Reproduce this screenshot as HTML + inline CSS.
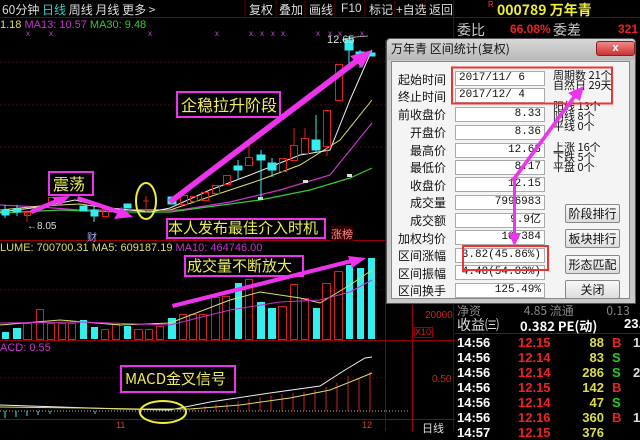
<!DOCTYPE html>
<html><head><meta charset="utf-8"><style>
*{margin:0;padding:0;box-sizing:border-box}
body{width:640px;height:431px;background:#000;overflow:hidden;position:relative;font-family:"Liberation Sans","Noto Sans CJK SC",sans-serif;color:#ddd}
.a{position:absolute;white-space:nowrap}
.cj{font-family:"Noto Sans CJK SC","WenQuanYi Zen Hei",sans-serif}
.lbl{position:absolute;right:0;width:60px;text-align:right;font-size:12px;color:#111}
.inp{position:absolute;left:455px;width:90px;height:15px;background:#fff;border:1px solid #aaa;font-size:11px;color:#111;text-align:right;padding-right:3px;line-height:13px;font-family:"Liberation Mono","Noto Sans CJK SC",monospace}
.btn{position:absolute;left:565px;width:55px;height:19px;background:linear-gradient(#f8f8f8,#ddd);border:1px solid #888;border-radius:2px;font-size:12px;color:#111;text-align:center;line-height:17px}
.tr{position:absolute;left:457px;font-size:13px;font-weight:bold;height:15px;line-height:15px}
.tb{position:absolute;top:1px;font-size:12px;color:#ddd}
</style></head><body>
<svg class="a" style="left:0;top:0" width="640" height="431">
<line x1="0" y1="17.5" x2="640" y2="17.5" stroke="#700" />
<g stroke="#600"><line x1="245" y1="0" x2="245" y2="17"/><line x1="276" y1="0" x2="276" y2="17"/><line x1="305" y1="0" x2="305" y2="17"/><line x1="335" y1="0" x2="335" y2="17"/><line x1="365" y1="0" x2="365" y2="17"/><line x1="395" y1="0" x2="395" y2="17"/><line x1="425" y1="0" x2="425" y2="17"/><line x1="453.5" y1="0" x2="453.5" y2="431"/></g>
<g stroke="#500" stroke-dasharray="2,2"><line x1="0" y1="62" x2="385" y2="62"/><line x1="0" y1="105" x2="385" y2="105"/><line x1="0" y1="147" x2="385" y2="147"/><line x1="0" y1="290" x2="385" y2="290"/><line x1="0" y1="378" x2="385" y2="378"/></g>
<line x1="0" y1="240.5" x2="385" y2="240.5" stroke="#900"/>
<line x1="0" y1="340.5" x2="455" y2="340.5" stroke="#900"/>
<line x1="0" y1="419.5" x2="455" y2="419.5" stroke="#900"/>
<line x1="385.5" y1="40" x2="385.5" y2="431" stroke="#700"/>
<line x1="412.5" y1="305" x2="412.5" y2="431" stroke="#900"/>
<line x1="455" y1="333.5" x2="640" y2="333.5" stroke="#900"/>
<line x1="386" y1="411" x2="410" y2="411" stroke="#aaa" stroke-dasharray="1,2"/>
<rect x="414.5" y="327.5" width="18" height="10" fill="none" stroke="#900"/>
<g fill="#c4c" font-size="8"><text x="26" y="36">x</text><text x="49" y="36">x</text><text x="148" y="36">x</text><text x="215" y="36">x</text><text x="249" y="36">x</text><text x="260" y="36">x</text><text x="271" y="36">x</text><text x="281" y="36">x</text><text x="316" y="36">x</text><text x="328" y="36">x</text><text x="338" y="36">x</text><text x="360" y="36">x</text></g>
<polyline fill="none" stroke="#c3c" stroke-width="1.2" points="0,205 40,207 80,210 120,210 180,210 230,202 280,190 330,175 372,123"/>
<polyline fill="none" stroke="#3c3" stroke-width="1.2" points="0,213 60,210 120,212 170,212 260,200 310,190 350,178 372,168"/>
<polyline fill="none" stroke="#dd6" stroke-width="1" points="0,210 40,206 80,204 120,210 170,210 260,180 300,165 340,140 372,100"/>
<polyline fill="none" stroke="#eee" stroke-width="1" points="0,212 40,207 75,200 110,208 150,212 170,208 210,190 250,175 300,155 330,150 350,100 372,50"/>
<g fill="#ddd"><rect x="258" y="197" width="5" height="3"/><rect x="303" y="180" width="5" height="3"/><rect x="347" y="174" width="5" height="3"/></g>
<g stroke="#3ee" fill="#3ee"><line x1="5" y1="205" x2="5" y2="218"/><rect x="2" y="210" width="7" height="5"/><line x1="17" y1="205" x2="17" y2="216"/><rect x="13" y="209" width="8" height="3"/><rect x="80" y="206" width="7" height="5"/><line x1="94" y1="205" x2="94" y2="222"/><rect x="91" y="210" width="7" height="6"/><rect x="124" y="204" width="7" height="4"/><rect x="168" y="197" width="8" height="7"/><line x1="238" y1="160" x2="238" y2="180"/><rect x="234" y="166" width="8" height="4"/><line x1="261" y1="150" x2="261" y2="200"/><rect x="257" y="155" width="8" height="5"/><line x1="272" y1="158" x2="272" y2="177"/><rect x="268" y="163" width="8" height="7"/><line x1="316" y1="115" x2="316" y2="152"/><rect x="312" y="140" width="8" height="10"/><line x1="349" y1="36" x2="349" y2="64"/><rect x="345" y="40" width="8" height="10"/><line x1="360" y1="50" x2="360" y2="68"/><rect x="356" y="52" width="8" height="4"/><rect x="367" y="53" width="8" height="3"/></g>
<g stroke="#d22" fill="none"><line x1="27" y1="210" x2="27" y2="222"/><rect x="24.5" y="212.5" width="6" height="3"/><rect x="48.5" y="197.5" width="6" height="5"/><rect x="102.5" y="208.5" width="6" height="8"/><line x1="146" y1="196" x2="146" y2="212"/><line x1="143" y1="201" x2="149" y2="201"/><rect x="180.5" y="195.5" width="7" height="9"/><rect x="190.5" y="196.5" width="7" height="5"/><rect x="201.5" y="192.5" width="7" height="8"/><rect x="212.5" y="185.5" width="7" height="8"/><rect x="223.5" y="175.5" width="7" height="9"/><line x1="249" y1="145" x2="249" y2="157"/><rect x="245.5" y="157.5" width="7" height="8"/><rect x="279.5" y="158.5" width="7" height="13"/><line x1="294" y1="128" x2="294" y2="145"/><rect x="290.5" y="145.5" width="7" height="15"/><line x1="305" y1="128" x2="305" y2="138"/><rect x="301.5" y="138.5" width="7" height="15"/><line x1="327" y1="146" x2="327" y2="156"/><rect x="323.5" y="110.5" width="7" height="36"/><rect x="335.5" y="64.5" width="7" height="36"/></g>
<polyline points="342,40 355,37 368,36" fill="none" stroke="#ccc" stroke-width="0.8"/>
<g fill="#3ee"><rect x="2" y="332" width="7" height="7"/><rect x="13" y="328" width="8" height="11"/><rect x="80" y="320" width="7" height="19"/><rect x="91" y="327" width="7" height="12"/><rect x="124" y="326" width="7" height="13"/><rect x="168" y="318" width="8" height="21"/><rect x="235" y="283" width="7" height="56"/><rect x="257" y="302" width="8" height="37"/><rect x="268" y="308" width="8" height="31"/><rect x="313" y="308" width="7" height="31"/><rect x="346" y="265" width="7" height="74"/><rect x="357" y="268" width="7" height="71"/><rect x="368" y="258" width="7" height="81"/></g>
<g fill="none" stroke="#c22"><rect x="23.5" y="323.5" width="8" height="16"/><rect x="36.5" y="309.5" width="7" height="30"/><rect x="47.5" y="323.5" width="7" height="16"/><rect x="58.5" y="323.5" width="7" height="16"/><rect x="68.5" y="323.5" width="7" height="16"/><rect x="101.5" y="329.5" width="7" height="10"/><rect x="112.5" y="324.5" width="7" height="15"/><rect x="134.5" y="329.5" width="8" height="10"/><rect x="145.5" y="329.5" width="7" height="10"/><rect x="156.5" y="326.5" width="7" height="13"/><rect x="179.5" y="314.5" width="7" height="25"/><rect x="189.5" y="314.5" width="7" height="25"/><rect x="199.5" y="314.5" width="7" height="25"/><rect x="211.5" y="297.5" width="8" height="42"/><rect x="222.5" y="296.5" width="7" height="43"/><rect x="245.5" y="279.5" width="7" height="60"/><rect x="278.5" y="306.5" width="8" height="33"/><rect x="290.5" y="284.5" width="7" height="55"/><rect x="301.5" y="298.5" width="7" height="41"/><rect x="322.5" y="283.5" width="8" height="56"/><rect x="334.5" y="271.5" width="8" height="68"/></g>
<polyline fill="none" stroke="#dd6" points="0,325 60,320 120,325 170,323 230,300 260,292 300,298 320,303 350,285 372,270"/>
<polyline fill="none" stroke="#c3c" points="0,323 80,322 170,325 230,310 280,302 320,300 350,292 372,280"/>
<line x1="0" y1="411" x2="385" y2="411" stroke="#bbb" stroke-dasharray="1,2"/>
<g stroke="#3ee"><line x1="5" y1="411" x2="5" y2="418"/><line x1="16" y1="411" x2="16" y2="417"/><line x1="27" y1="411" x2="27" y2="416"/><line x1="38" y1="411" x2="38" y2="415"/><line x1="50" y1="411" x2="50" y2="414"/><line x1="95" y1="411" x2="95" y2="414"/></g>
<g stroke="#c22"><line x1="194" y1="411" x2="194" y2="408"/><line x1="205" y1="411" x2="205" y2="406"/><line x1="216" y1="411" x2="216" y2="404"/><line x1="227" y1="411" x2="227" y2="403"/><line x1="238" y1="411" x2="238" y2="401"/><line x1="249" y1="411" x2="249" y2="399"/><line x1="260" y1="411" x2="260" y2="397"/><line x1="271" y1="411" x2="271" y2="396"/><line x1="282" y1="411" x2="282" y2="394"/><line x1="293" y1="411" x2="293" y2="393"/><line x1="304" y1="411" x2="304" y2="392"/><line x1="315" y1="411" x2="315" y2="390"/><line x1="326" y1="411" x2="326" y2="387"/><line x1="337" y1="411" x2="337" y2="383"/><line x1="348" y1="411" x2="348" y2="376"/><line x1="359" y1="411" x2="359" y2="379"/><line x1="370" y1="411" x2="370" y2="372"/></g>
<polyline fill="none" stroke="#eee" points="0,405 60,407 120,409 170,410 210,402 270,393 320,386 345,370 365,358 372,357"/>
<polyline fill="none" stroke="#dd6" points="0,407 80,408 140,409 190,409 240,405 290,398 330,390 355,380 372,373"/>
<g fill="none" stroke="#e3e" stroke-width="2"><rect x="177" y="92" width="103" height="25"/><rect x="49" y="172" width="44" height="23"/><rect x="167" y="219" width="158" height="19"/><rect x="185" y="256" width="118" height="20"/><rect x="121" y="366" width="114" height="26"/></g>
<g fill="#e3e"><polygon points="168,200 172,204 360,62 357,57"/><polygon points="372,50 350,56 362,68"/><polygon points="30,210 32,214 58,203 56,199"/><polygon points="70,196 52,197 60,206"/><polygon points="78,196 77,200 118,214 120,210"/><polygon points="133,217 114,219 121,207"/><polygon points="172,304 173,308 352,263 351,259"/><polygon points="366,258 348,256 352,268"/></g>
<ellipse cx="146" cy="201" rx="10" ry="18" fill="none" stroke="#ee3" stroke-width="2"/>
<ellipse cx="163" cy="412" rx="23" ry="11" fill="none" stroke="#ee3" stroke-width="2"/>
</svg>
<div class="a cj" style="left:2px;top:1px;font-size:12px;color:#ddd">60分钟 <span style="color:#3cc">日线</span> 周线 月线 更多 &gt;</div>
<div class="tb cj" style="left:249px">复权</div><div class="tb cj" style="left:279px">叠加</div><div class="tb cj" style="left:309px">画线</div><div class="tb" style="left:341px">F10</div><div class="tb cj" style="left:369px">标记</div><div class="tb cj" style="left:396px">+自选</div><div class="tb cj" style="left:429px">返回</div>
<div class="a" style="left:488px;top:0;font-size:8px;color:#f33">R</div>
<div class="a cj" style="left:497px;top:0;font-size:14px;color:#ee3;font-weight:bold">000789 万年青</div>
<div class="a cj" style="left:457px;top:20px;font-size:14px;color:#ccc">委比</div>
<div class="a" style="left:510px;top:22px;font-size:12px;color:#e22;font-weight:bold">66.08%</div>
<div class="a cj" style="left:553px;top:20px;font-size:14px;color:#ccc">委差</div>
<div class="a" style="left:618px;top:22px;font-size:12px;color:#e22;font-weight:bold">321</div>
<div class="a" style="left:0;top:19px;font-size:11px"><span style="color:#dd6">1.18</span> <span style="color:#c3c">MA13: 10.57</span> <span style="color:#3c3">MA30: 9.48</span></div>
<div class="a" style="left:327px;top:34px;font-size:11px;color:#ddd">12.65</div>
<div class="a" style="left:27px;top:221px;font-size:10px;color:#ddd">←8.05</div>
<div class="a cj" style="left:87px;top:229px;font-size:10px;color:#aaf">财</div>
<div class="a cj" style="left:331px;top:226px;font-size:11px;color:#f88;background:#300">涨榜</div>
<div class="a" style="left:0;top:242px;font-size:11px;color:#dd6">LUME: 700700.31 MA5: 609187.19 <span style="color:#c3c">MA10: 464746.00</span></div>
<div class="a" style="left:0;top:342px;font-size:11px;color:#c3c">ACD: 0.55</div>
<div class="a cj" style="left:181px;top:92px;font-size:16px;color:#ee5">企稳拉升阶段</div>
<div class="a cj" style="left:53px;top:171px;font-size:16px;color:#ee5">震荡</div>
<div class="a cj" style="left:168px;top:217px;font-size:15px;color:#ee5">本人发布最佳介入时机</div>
<div class="a cj" style="left:187px;top:255px;font-size:15px;color:#ee5">成交量不断放大</div>
<div class="a cj" style="left:125px;top:368px;font-size:15px;color:#ee5">MACD金叉信号</div>
<div class="a" style="left:116px;top:420px;font-size:9px;color:#c44">11</div>
<div class="a" style="left:362px;top:420px;font-size:9px;color:#c44">12</div>
<div class="a" style="left:425px;top:310px;font-size:10px;color:#c22">20000</div>
<div class="a" style="left:415px;top:327px;font-size:9px;color:#c22">X10</div>
<div class="a" style="left:432px;top:374px;font-size:10px;color:#c22">0.50</div>
<div class="a cj" style="left:422px;top:420px;font-size:11px;color:#ddd">日线</div>
<div class="a cj" style="left:457px;top:302px;font-size:12px;color:#888">净资 <span style="margin-left:40px">4.85</span> 流通 <span style="margin-left:30px">0.13</span></div>
<div class="a cj" style="left:457px;top:315px;font-size:14px;color:#ddd">收益㈢</div>
<div class="a cj" style="left:520px;top:316px;font-size:13px;color:#fff;font-weight:bold">0.382 PE(动)</div>
<div class="a" style="left:624px;top:316px;font-size:13px;color:#fff;font-weight:bold">23.</div>
<div class="tr" style="top:335px;width:183px"><span style="color:#fff">14:56</span><span class="a" style="left:61px;color:#e22">12.15</span><span class="a" style="right:36px;color:#dd4">88</span><span class="a" style="left:155px;color:#e22">B</span><span class="a" style="left:176px;color:#ddd">1</span></div>
<div class="tr" style="top:350px;width:183px"><span style="color:#fff">14:56</span><span class="a" style="left:61px;color:#e22">12.14</span><span class="a" style="right:36px;color:#dd4">83</span><span class="a" style="left:155px;color:#2c2">S</span></div>
<div class="tr" style="top:365px;width:183px"><span style="color:#fff">14:56</span><span class="a" style="left:61px;color:#e22">12.14</span><span class="a" style="right:36px;color:#dd4">286</span><span class="a" style="left:155px;color:#2c2">S</span><span class="a" style="left:176px;color:#ddd">2</span></div>
<div class="tr" style="top:380px;width:183px"><span style="color:#fff">14:56</span><span class="a" style="left:61px;color:#e22">12.15</span><span class="a" style="right:36px;color:#dd4">142</span><span class="a" style="left:155px;color:#e22">B</span></div>
<div class="tr" style="top:395px;width:183px"><span style="color:#fff">14:56</span><span class="a" style="left:61px;color:#e22">12.14</span><span class="a" style="right:36px;color:#dd4">47</span><span class="a" style="left:155px;color:#2c2">S</span></div>
<div class="tr" style="top:410px;width:183px"><span style="color:#fff">14:56</span><span class="a" style="left:61px;color:#e22">12.16</span><span class="a" style="right:36px;color:#dd4">360</span><span class="a" style="left:155px;color:#e22">B</span><span class="a" style="left:176px;color:#ddd">1</span></div>
<div class="tr" style="top:425px;width:183px"><span style="color:#fff">14:57</span><span class="a" style="left:61px;color:#e22">12.15</span><span class="a" style="right:36px;color:#dd4">376</span></div>
<div class="a" style="left:386px;top:38px;width:250px;height:266px;background:#c9c9c9;border:1px solid #555;border-radius:4px 4px 0 0"></div>
<div class="a" style="left:387px;top:39px;width:248px;height:21px;background:linear-gradient(#d8d8d8,#b8b8b8);border-radius:4px 4px 0 0"></div>
<div class="a cj" style="left:391px;top:40px;font-size:12px;color:#111">万年青 区间统计(复权)</div>
<div class="a" style="left:596px;top:41px;width:39px;height:15px;background:linear-gradient(#e88,#c33);border:1px solid #822;border-radius:3px;color:#fff;font-size:11px;font-weight:bold;text-align:center;line-height:13px">x</div>
<div class="a" style="left:391px;top:61px;width:239px;height:238px;background:#f4f4f4;border:1px solid #888"></div>
<div class="a cj" style="left:386px;top:0;width:60px;height:431px">
<div class="lbl" style="top:71px">起始时间</div><div class="lbl" style="top:88px">终止时间</div><div class="lbl" style="top:106px">前收盘价</div><div class="lbl" style="top:124px">开盘价</div><div class="lbl" style="top:142px">最高价</div><div class="lbl" style="top:159px">最低价</div><div class="lbl" style="top:177px">收盘价</div><div class="lbl" style="top:194px">成交量</div><div class="lbl" style="top:212px">成交额</div><div class="lbl" style="top:230px">加权均价</div><div class="lbl" style="top:247px">区间涨幅</div><div class="lbl" style="top:265px">区间振幅</div><div class="lbl" style="top:282px">区间换手</div>
</div>
<div class="inp" style="top:71px;text-align:left;padding-left:3px">2017/11/ 6</div>
<div class="inp" style="top:88px;text-align:left;padding-left:3px">2017/12/ 4</div>
<div class="inp" style="top:107px">8.33</div><div class="inp" style="top:125px">8.36</div><div class="inp" style="top:143px">12.65</div><div class="inp" style="top:160px">8.17</div><div class="inp" style="top:177px">12.15</div><div class="inp" style="top:195px">7996983</div><div class="inp" style="top:213px">9.9亿</div><div class="inp" style="top:230px">10.384</div><div class="inp" style="top:248px">3.82(45.86%)</div><div class="inp" style="top:265px">4.48(54.83%)</div><div class="inp" style="top:283px">125.49%</div>
<div class="a cj" style="left:553px;top:70px;font-size:11px;color:#111;line-height:10px">周期数 21个<br>自然日 29天</div>
<div class="a cj" style="left:553px;top:101px;font-size:11px;color:#111;line-height:10px">阳线 13个<br>阴线 8个<br>平线 0个</div>
<div class="a cj" style="left:553px;top:142px;font-size:11px;color:#111;line-height:10px">上涨 16个<br>下跌 5个<br>平盘 0个</div>
<div class="btn cj" style="top:204px">阶段排行</div><div class="btn cj" style="top:229px">板块排行</div><div class="btn cj" style="top:255px">形态匹配</div><div class="btn cj" style="top:280px">关闭</div>
<svg class="a" style="left:0;top:0" width="640" height="431">
<rect x="452" y="67.5" width="160" height="36" fill="none" stroke="#e33" stroke-width="2"/>
<rect x="463" y="246" width="85" height="24" fill="none" stroke="#e33" stroke-width="2"/>
<g fill="#e3e"><polygon points="511,180 514,182 577,96 574,94"/><polygon points="584,86 568,93 580,101"/><rect x="513" y="180" width="3" height="55"/><polygon points="508,233 521,233 514.5,246"/></g>
</svg>
</body></html>
